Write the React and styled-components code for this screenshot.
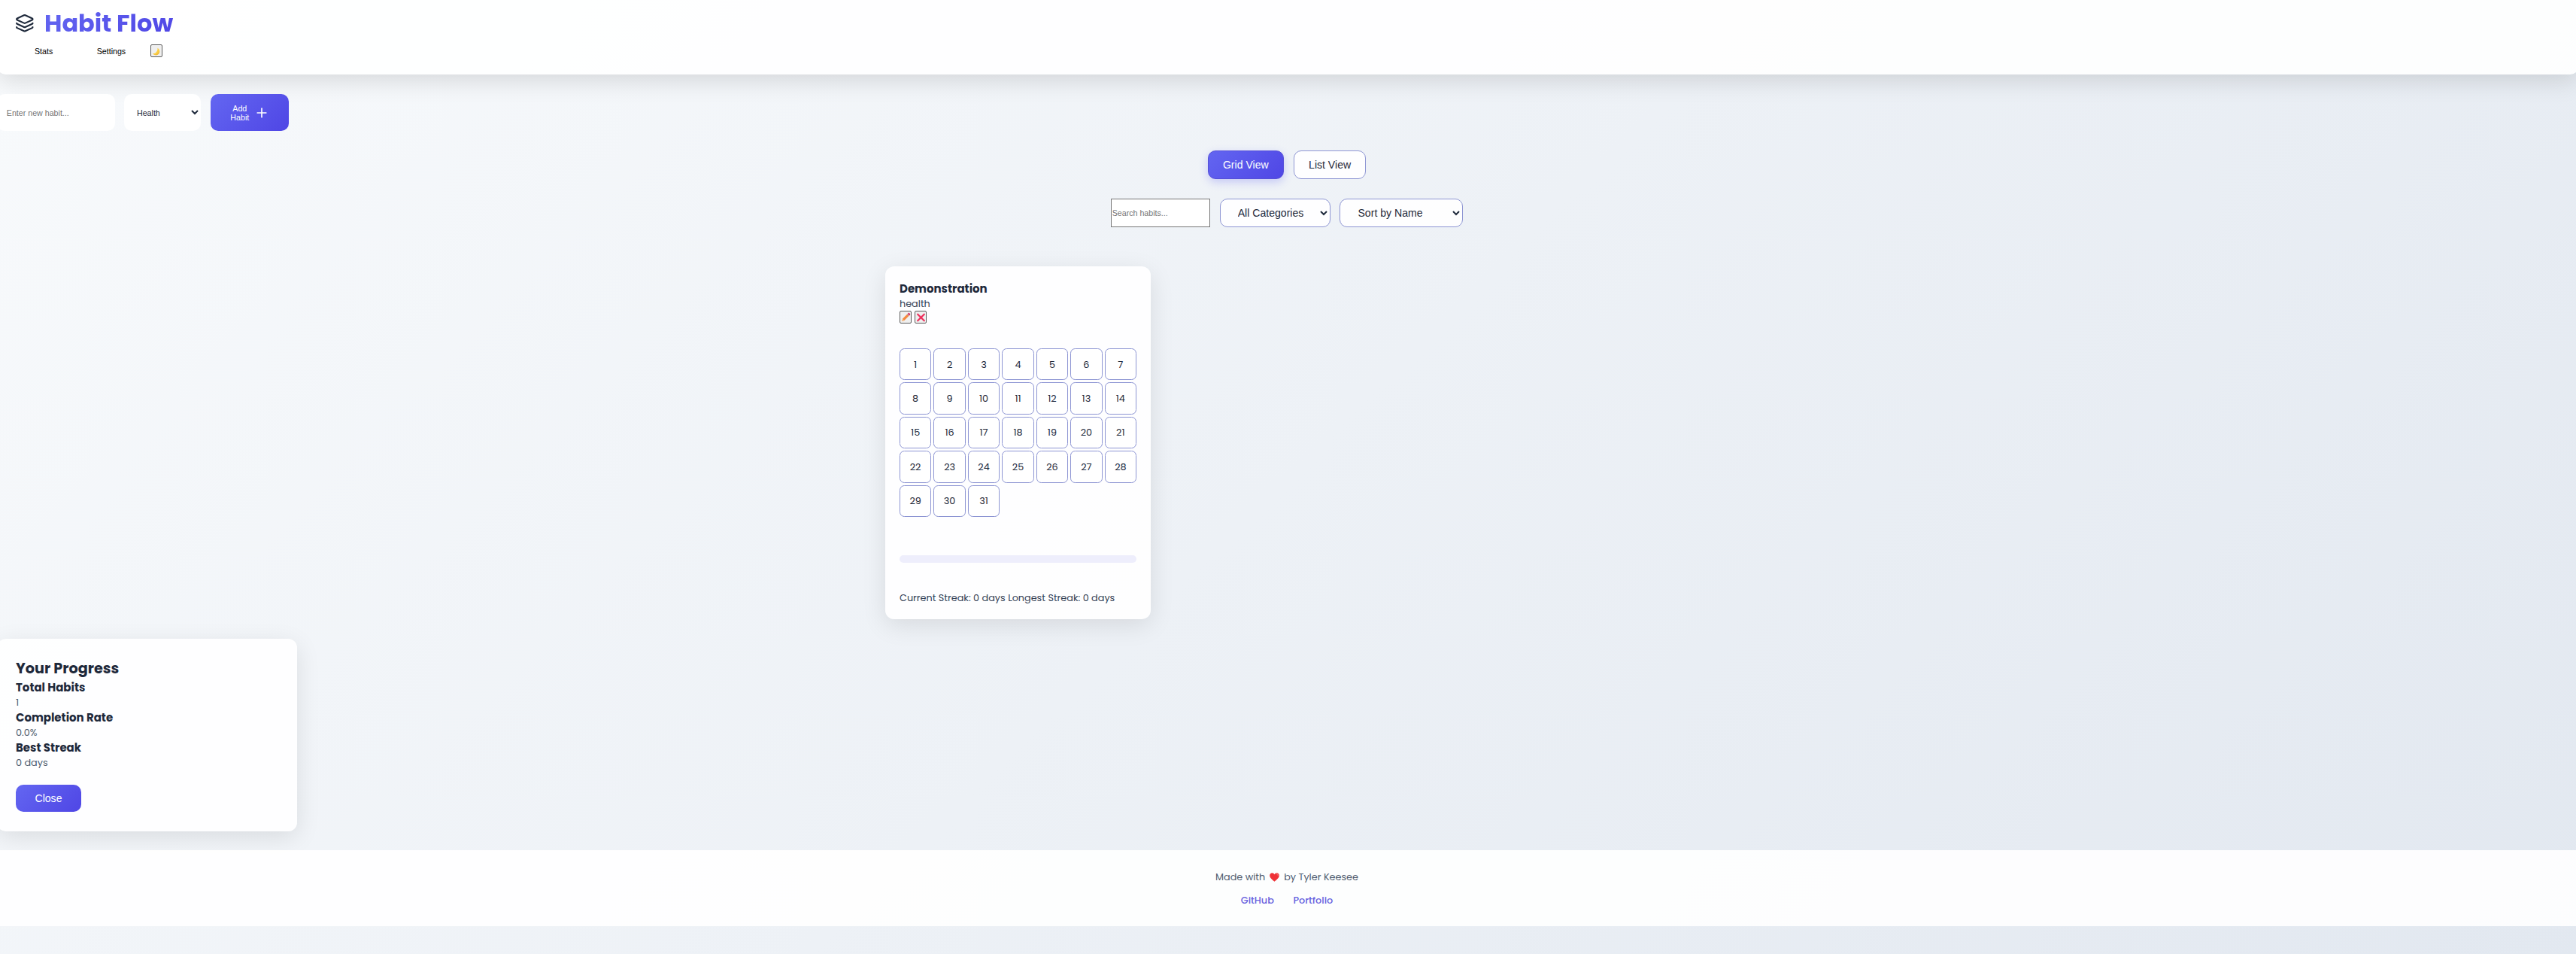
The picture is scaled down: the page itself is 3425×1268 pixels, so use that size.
import React from 'react';
import styled, { createGlobalStyle, css } from 'styled-components';
import { Layers, Plus } from 'lucide-react';

const GlobalStyle = createGlobalStyle`
  * { box-sizing: border-box; margin: 0; padding: 0; }
  html { overflow: hidden; }
  body {
    min-height: 1268px;
    overflow: hidden;
    background: linear-gradient(135deg, #f8fafc 0%, #e2e8f0 100%);
    color: #1e293b;
    font-family: Poppins, Inter, sans-serif;
    font-size: 12.8px;
    line-height: 19px;
  }
  button, input, select {
    font-family: Arial, "Liberation Sans", sans-serif;
    font-size: 10.67px;
  }
`;

const primary = css`
  background: linear-gradient(135deg, #6366f1, #4f46e5);
  color: #fff;
`;

const Page = styled.div`
  display: flex;
  flex-direction: column;
  margin: 0 -4px;
`;

const Header = styled.header`
  height: 99px;
  padding: 12.6px 24px 0;
  background: rgba(255, 255, 255, 0.9);
  border-radius: 0 0 12px 12px;
  box-shadow: 0 8px 32px rgba(0, 0, 0, 0.13);
`;

const Brand = styled.div`
  display: flex;
  align-items: center;
  gap: 13.4px;
  height: 36px;
`;

const Title = styled.h1`
  font-size: 32px;
  line-height: 36px;
  font-weight: 700;
  background: linear-gradient(135deg, #6366f1, #4f46e5);
  background-clip: text;
  -webkit-background-clip: text;
  color: transparent;
`;

const Nav = styled.nav`
  display: flex;
  align-items: center;
  gap: 6.4px;
  height: 38.4px;
`;

const NavButton = styled.button`
  height: 25px;
  padding: 0 26px;
  border: 0;
  border-radius: 10px;
  background: transparent;
  color: #000;
`;

const IconButton = styled.button`
  display: inline-flex;
  align-items: flex-end;
  justify-content: center;
  width: 16px;
  height: 17px;
  padding: 0 0 1px;
  border: 1px solid #5c5c5c;
  border-radius: 2px;
  background: #efefef;
`;

const HabitForm = styled.form`
  display: flex;
  gap: 12.5px;
  height: 48.7px;
  margin-top: 26px;
`;

const HabitInput = styled.input`
  width: 156.7px;
  padding: 1px 12.8px 0;
  border: 0;
  border-radius: 10px;
  background: rgba(255, 255, 255, 0.92);
  &::placeholder { color: #757575; }
`;

const HabitCategory = styled.select`
  width: 102px;
  padding: 1px 12.8px 0;
  border: 0;
  border-radius: 10px;
  background: rgba(255, 255, 255, 0.92);
  color: #1e293b;
`;

const AddButton = styled.button`
  ${primary}
  display: flex;
  align-items: center;
  justify-content: space-between;
  width: 104px;
  margin-left: 0.5px;
  padding: 1px 26px 0 25.6px;
  border: 0;
  border-radius: 10px;
  line-height: 12px;
`;

const AddLabel = styled.span`
  width: 26px;
`;

const Controls = styled.div`
  display: flex;
  justify-content: center;
  gap: 12.8px;
  height: 38px;
  margin-top: 26.3px;
  padding-right: 3px;
`;

const ViewButton = styled.button`
  width: ${(p) => (p.$active ? '101.4px' : '96.6px')};
  border: 1px solid #8d95d3;
  border-radius: 10px;
  background: rgba(255, 255, 255, 0.9);
  color: #1e293b;
  font-size: 14.08px;
  ${(p) => p.$active && css`
    ${primary}
    background-origin: border-box;
    border-color: #5650d8;
    box-shadow: 0 4px 12px rgba(99, 102, 241, 0.3);
  `}
`;

const Search = styled.input`
  width: 132px;
  padding: 0 1px;
  border: 1px solid #767676;
  background: #fff;
  &::placeholder { color: #757575; }
`;

const Filter = styled.select`
  width: ${(p) => p.$width};
  padding: 0 18px 0 19.2px;
  border: 1px solid #8d95d3;
  border-radius: 10px;
  background: rgba(255, 255, 255, 0.9);
  color: #1e293b;
  font-size: 14.08px;
`;

const Panel = styled.section`
  border-radius: 12px;
  background: rgba(255, 255, 255, 0.9);
  box-shadow: 0 8px 32px rgba(0, 0, 0, 0.1);
`;

const HabitCard = styled(Panel)`
  width: 353px;
  height: 469px;
  margin: 51.7px 0 0 1181px;
  padding: 19px 19px 0;
`;

const CardTitle = styled.h3`
  font-size: 14.976px;
  line-height: 21.3px;
  font-weight: 700;
`;

const Copy = styled.p`
  height: 19px;
  color: ${(p) => (p.$muted ? '#4f5b6e' : '#334155')};
`;

const CardActions = styled.div`
  display: flex;
  gap: 4px;
  height: 49.7px;
`;

const Calendar = styled.div`
  display: grid;
  grid-template-columns: repeat(7, 1fr);
  gap: 3.2px;
`;

const Day = styled.div`
  display: flex;
  align-items: center;
  justify-content: center;
  aspect-ratio: 1;
  border: 1px solid #8d95d3;
  border-radius: 6.4px;
  background: rgba(255, 255, 255, 0.7);
`;

const ProgressTrack = styled.div`
  height: 10px;
  margin: 51px 0 37px;
  border-radius: 5px;
  background: #eeeefc;
`;

const ProgressPanel = styled(Panel)`
  width: 399px;
  height: 256px;
  margin-top: 26px;
  padding: 25px;
`;

const PanelTitle = styled.h2`
  font-size: 19.2px;
  line-height: 29.5px;
  font-weight: 700;
`;

const StatName = styled.h3`
  height: 21px;
  font-size: 14.976px;
  line-height: 21px;
  font-weight: 700;
`;

const CloseButton = styled.button`
  ${primary}
  width: 87px;
  height: 35.7px;
  margin-top: 19.5px;
  border: 0;
  border-radius: 10px;
  font-size: 14.08px;
`;

const Footer = styled.footer`
  display: flex;
  flex-direction: column;
  align-items: center;
  gap: 12px;
  height: 101px;
  margin-top: 25px;
  padding: 26.5px 3px 0 0;
  background: rgba(255, 255, 255, 0.9);
`;

const Credit = styled.p`
  display: flex;
  align-items: center;
  gap: 6px;
  color: #4f5b6e;
`;

const Links = styled.div`
  display: flex;
  gap: 25.6px;
`;

const FooterLink = styled.a`
  color: #6862df;
  font-weight: 500;
  text-decoration: none;
`;

const MoonIcon = () => (
  <svg width="11" height="11" viewBox="0 0 11 11">
    <path d="M7.500.8C11 3 11.100 7.300 8.200 9.300 5.700 11 2.300 10.300 1 8c3.400.6 6.800-2.500 6.500-7.200z" fill="#fbcf45" />
    <path d="M9.800 4.500c.3 2-.3 3.800-1.800 4.900-1.900 1.200-4.200 1-5.700.1 3.700.3 6.500-1.500 7.500-5z" fill="#f0b93c" />
  </svg>
);

const PencilIcon = () => (
  <svg width="13" height="13" viewBox="0 0 13 13">
    <path d="M1.200 11.900 2 8.800 8.300 2.500 10.600 4.800 4.300 11.100z" fill="#f4883e" />
    <path d="m1.200 11.900.8-3.100 2.300 2.300z" fill="#f7c38b" />
    <path d="m8 2.800.8-.8 2.300 2.300-.8.8z" fill="#b9a5b5" />
    <path d="m8.700 2.100.9-.9c.5-.5 1.100-.4 1.500 0l.9.9c.4.4.4 1 0 1.400l-.9.9z" fill="#dc2f62" />
  </svg>
);

const CrossIcon = () => (
  <svg width="13" height="13" viewBox="0 0 13 13">
    <path d="m2.200 2.700 8.600 8.600M10.800 2.700l-8.600 8.600" stroke="#ed2f5b" strokeWidth="2.200" strokeLinecap="round" />
  </svg>
);

const HeartIcon = () => (
  <svg width="13" height="12" viewBox="0 0 13 12">
    <path d="M6.500 11.800C4.500 10 .2 7 .2 3.700.2 1.600 1.700.3 3.300.3c1.500 0 2.600.8 3.200 2 .6-1.200 1.700-2 3.200-2 1.600 0 3.100 1.300 3.100 3.400C12.800 7 8.500 10 6.500 11.800z" fill="#ef3237" />
    <path d="M9.200 1.500c1.300-.1 2.200.9 2.100 2.200" stroke="#f77b78" strokeWidth="1" fill="none" strokeLinecap="round" />
  </svg>
);

const days = Array.from({ length: 31 }, (_, i) => i + 1);

const stats = [
  { name: 'Total Habits', value: '1' },
  { name: 'Completion Rate', value: '0.0%' },
  { name: 'Best Streak', value: '0 days' },
];

export default function App() {
  return (
    <Page>
      <GlobalStyle />
      <Header>
        <Brand>
          <Layers size={25.6} color="#1e293b" strokeWidth={2} />
          <Title>Habit Flow</Title>
        </Brand>
        <Nav>
          <NavButton>Stats</NavButton>
          <NavButton>Settings</NavButton>
          <IconButton aria-label="Toggle theme"><MoonIcon /></IconButton>
        </Nav>
      </Header>

      <HabitForm>
        <HabitInput placeholder="Enter new habit..." />
        <HabitCategory defaultValue="health">
          <option value="health">Health</option>
        </HabitCategory>
        <AddButton type="button">
          <AddLabel>Add Habit</AddLabel>
          <Plus size={20} />
        </AddButton>
      </HabitForm>

      <Controls>
        <ViewButton $active>Grid View</ViewButton>
        <ViewButton>List View</ViewButton>
      </Controls>
      <Controls>
        <Search placeholder="Search habits..." />
        <Filter $width="147px"><option>All Categories</option></Filter>
        <Filter $width="164px"><option>Sort by Name</option></Filter>
      </Controls>

      <HabitCard>
        <CardTitle>Demonstration</CardTitle>
        <Copy>health</Copy>
        <CardActions>
          <IconButton aria-label="Edit"><PencilIcon /></IconButton>
          <IconButton aria-label="Delete"><CrossIcon /></IconButton>
        </CardActions>
        <Calendar>
          {days.map((d) => <Day key={d}>{d}</Day>)}
        </Calendar>
        <ProgressTrack />
        <Copy>Current Streak: 0 days Longest Streak: 0 days</Copy>
      </HabitCard>

      <ProgressPanel>
        <PanelTitle>Your Progress</PanelTitle>
        {stats.map((s) => (
          <React.Fragment key={s.name}>
            <StatName>{s.name}</StatName>
            <Copy $muted>{s.value}</Copy>
          </React.Fragment>
        ))}
        <CloseButton>Close</CloseButton>
      </ProgressPanel>

      <Footer>
        <Credit>
          <span>Made with</span>
          <HeartIcon />
          <span>by Tyler Keesee</span>
        </Credit>
        <Links>
          <FooterLink>GitHub</FooterLink>
          <FooterLink>Portfolio</FooterLink>
        </Links>
      </Footer>
    </Page>
  );
}
